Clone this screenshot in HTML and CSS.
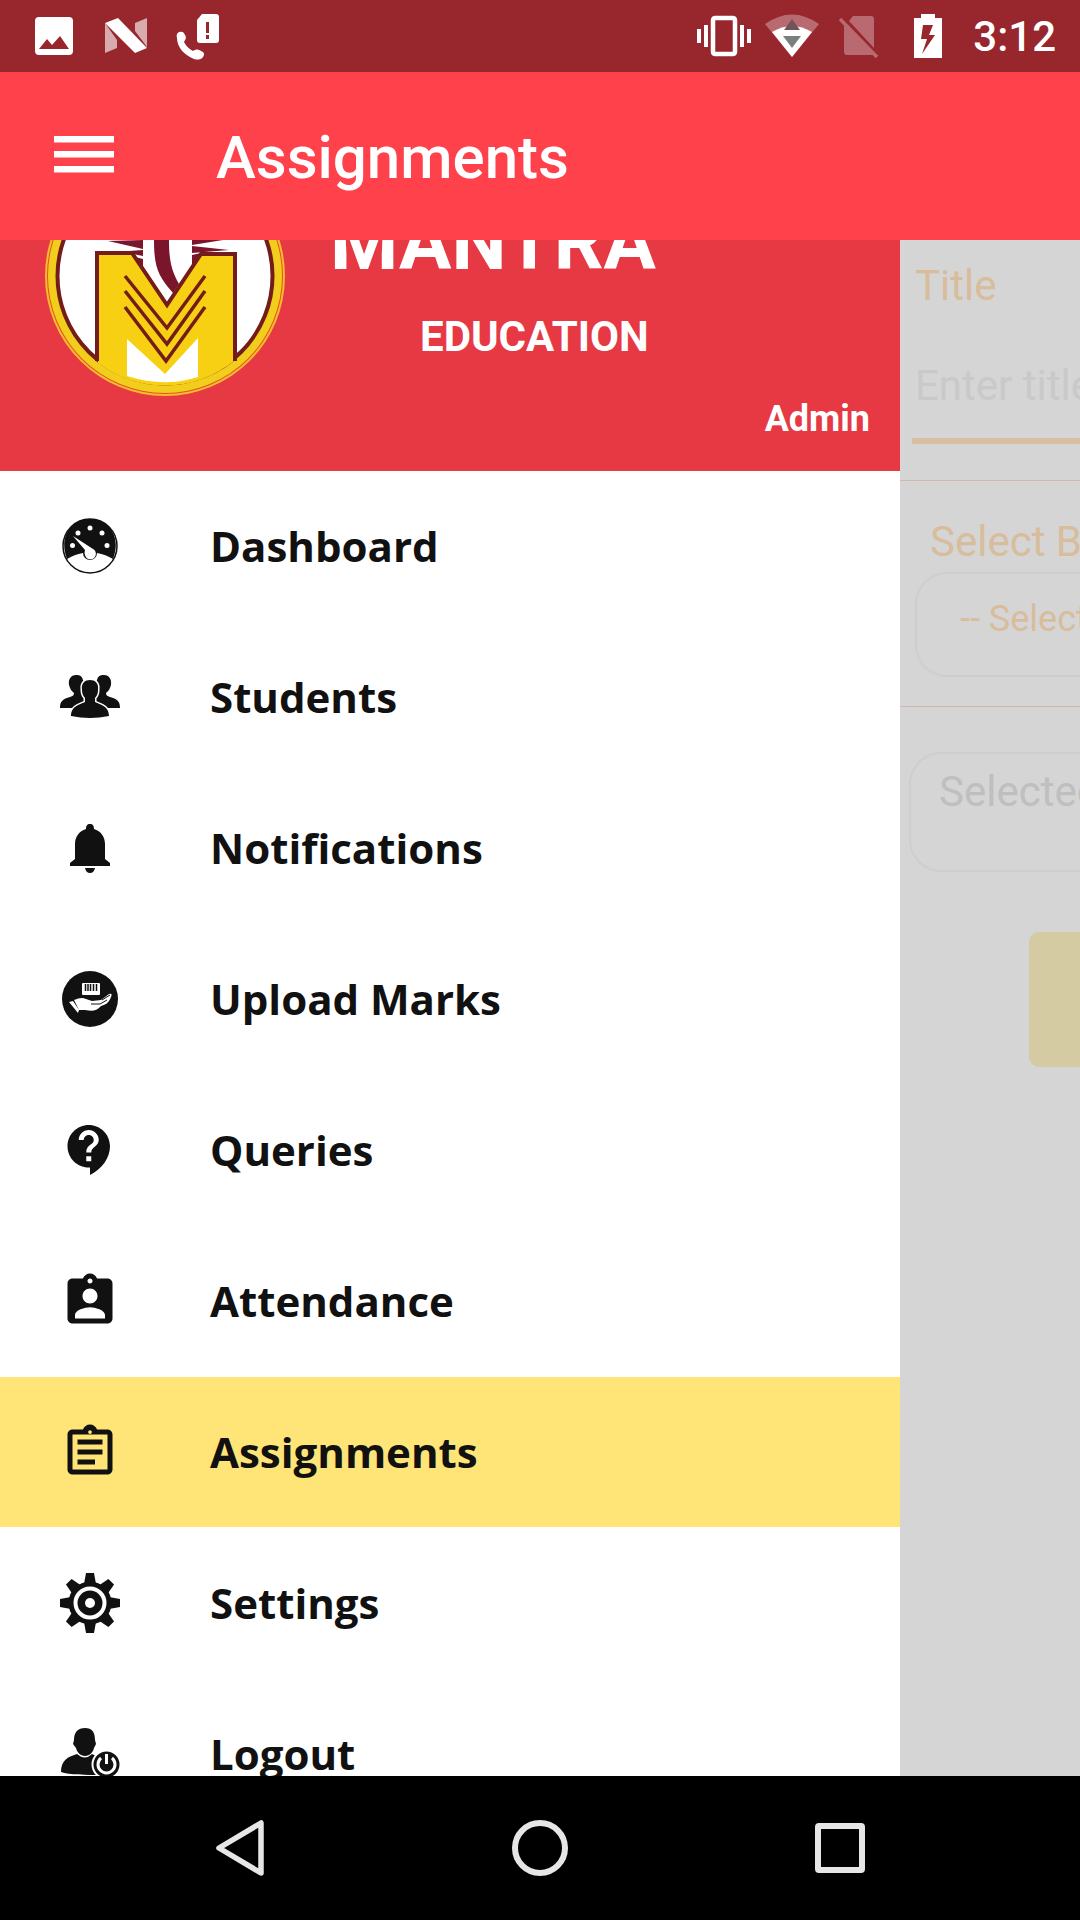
FILE: index.html
```html
<!DOCTYPE html>
<html lang="en">
<head>
<meta charset="utf-8">
<meta name="viewport" content="width=device-width, initial-scale=1">
<title>Assignments</title>
<link rel="stylesheet" href="styles.css">
</head>
<body>
<div class="app">
  <div class="status">
    <svg class="status-icon" viewBox="0 0 54 60" aria-hidden="true"><path fill="#fff" fill-rule="evenodd" d="M12 11h30q4 0 4 4v30q0 4-4 4H12q-4 0-4-4V15q0-4 4-4zm0 32h30l-9-13-8 9-5-6z"/></svg>
    <svg class="status-icon left" viewBox="0 0 54 60" aria-hidden="true"><path fill="#fff" opacity=".62" d="M6 17l12 17v8L6 47zM36 17l12-5v29L36 25z"/><path fill="#fff" d="M6 17l13-5 29 30-12 5z"/></svg>
    <svg class="status-icon left" viewBox="0 0 54 60" aria-hidden="true"><path fill="#fff" fill-rule="evenodd" d="M31 8h14q3 0 3 3v23q0 3-3 3H29q-3 0-3-3V14zm4 8v11h3V16zm0 13v4h3v-4z"/><path fill="#fff" d="M8 26c3-1 5 0 6 3 2 3 0 5-1 7 2 4 5 7 9 9 3-2 5-2 8 0 3 1 4 3 2 6-2 3-6 3-9 2C13 49 6 41 6 32c-1-3 0-5 2-6z"/></svg>
    <span class="spacer"></span>
    <svg class="status-icon right" viewBox="0 0 54 60" aria-hidden="true"><rect x="16" y="12" width="22" height="36" rx="2" fill="none" stroke="#fff" stroke-width="4.500"/><path fill="#fff" d="M0 23h4v14H0zM7 19h4v22H7zM43 19h4v22h-4zM50 23h4v14h-4z"/></svg>
    <svg class="status-icon right" viewBox="0 0 54 60" aria-hidden="true"><path fill="#b96a70" d="M0 18Q27-1 54 18L27 51z"/><path fill="#fff" d="M7 26Q27 14 47 26L27 51z"/><path fill="#6f5556" d="M27 13l8 11H19z"/><path fill="#7a8080" d="M18 30h18l-9 12z"/></svg>
    <svg class="status-icon right" viewBox="0 0 54 60" aria-hidden="true"><path fill="#b96a70" d="M20 10h18q3 0 3 3v29L16 15zM11 19l30 30H14q-3 0-3-3z"/><path d="M7 13l37 38" stroke="#b96a70" stroke-width="3.500"/></svg>
    <svg class="status-icon right" viewBox="0 0 54 60" aria-hidden="true"><path fill="#fff" fill-rule="evenodd" d="M20 8h14v4h7v40H13V12h7zm2 11l-2 14h6l-5 15 13-19h-6l4-10z"/></svg>
    <span class="clock">3:12</span>
  </div>

  <header class="toolbar">
    <button class="menu-button" type="button" aria-label="Menu"><svg class="burger" viewBox="0 0 60 40" aria-hidden="true"><path fill="#fff" d="M0 0h60v6.500H0zM0 15h60v6.500H0zM0 30h60v6.500H0z"/></svg></button>
    <h1 class="toolbar-title">Assignments</h1>
  </header>

  <div class="stage">
    <aside class="drawer">
      <div class="profile">
        <svg class="logo" viewBox="45 10 240 156" aria-hidden="true">
          <circle cx="165" cy="46" r="120" fill="#f7bd2a"/>
          <circle cx="165" cy="46" r="118" fill="#e5502c"/>
          <circle cx="165" cy="46" r="117" fill="#f2ce1c"/>
          <circle cx="165" cy="46" r="107.500" fill="#fff" stroke="#731c1a" stroke-width="4"/>
          <path fill="#7a152b" d="M108 11l35-1v9zM129 21l14-1v6l-10-2zM135 27l8 2v10zM192 10h31l-31 5zM192 16l37 4-37 3zM192 25l9-2-9 13zM154 10c0 27 4 36 19 53l6-9c-8-14-10-25-10-44z"/>
          <path fill="#f8d013" d="M98 22h33l36 53 34-51h33v107A110 110 0 0 1 98 133z"/>
          <path fill="none" stroke="#731c1a" stroke-width="4" d="M97 131V23h35l35 52 34-51h34v107"/>
          <path fill="none" stroke="#731c1a" stroke-width="3.500" d="M125 46l42 52 38-52M125 61l42 53 38-53M125 77l41 54 39-54"/>
          <path fill="#fff" d="M127 109l38 35 33-36v39q-34 11-71-1z"/>
        </svg>
        <div class="brand">
          <p class="brand-name">MANTRA</p>
          <p class="brand-sub">EDUCATION</p>
          <p class="role">Admin</p>
        </div>
      </div>
      <nav class="menu">
        <a class="item" href="#dashboard">
          <svg class="icon" viewBox="0 0 60 60" aria-hidden="true"><circle cx="30" cy="30" r="27" fill="#fff" stroke="#111" stroke-width="1.500"/><path fill="#111" d="M7 43C-2 20 12 3 30 3s32 17 23 40c-5-3-10-5-16-6a7 7 0 1 1-14 0c-6 1-11 3-16 6z"/><path fill="#fff" d="M13 20l20 13a5.500 5.500 0 1 1-8 6q-1-2 0-5z"/><g fill="#fff"><circle cx="12.500" cy="29.500" r="2.500"/><circle cx="18" cy="17" r="2.500"/><circle cx="30" cy="12" r="2.500"/><circle cx="42" cy="17" r="2.500"/><circle cx="47" cy="29.500" r="2.500"/></g></svg>
          <span>Dashboard</span></a>
        <a class="item" href="#students">
          <svg class="icon" viewBox="0 0 60 60" aria-hidden="true"><path fill="#111" d="M9 18c-1-7 3-10 7-10 4 0 6 1 7 5l3 8v20H0c0-7 3-9 10-11 3-1 4-2 4-4-3-2-4-5-5-8zM51 18c1-7-3-10-7-10-4 0-6 1-7 5l-3 8v20h26c0-7-3-9-10-11-3-1-4-2-4-4 3-2 4-5 5-8z"/><path fill="#111" stroke="#fff" stroke-width="3" paint-order="stroke" d="M22 23c-1-7 3-10 8-10s9 3 8 10c0 3-1 6-3 8v4c3 2 14 3 14 14q-19 4-38 0c0-11 11-12 14-14v-4c-2-2-3-5-3-8z"/></svg>
          <span>Students</span></a>
        <a class="item" href="#notifications">
          <svg class="icon" viewBox="0 0 60 60" aria-hidden="true"><path fill="#111" d="M30 6c3 0 4 2 4 5 7 2 11 8 11 15v15l5 4v3H10v-3l5-4V26c0-7 4-13 11-15 0-3 1-5 4-5zM25 50h10q-1 5-5 5t-5-5z"/></svg>
          <span>Notifications</span></a>
        <a class="item" href="#upload">
          <svg class="icon" viewBox="0 0 60 60" aria-hidden="true"><circle cx="30" cy="30" r="28" fill="#111"/><rect x="22" y="14" width="18" height="12" rx="1" fill="#fff"/><path stroke="#111" stroke-width="1.500" d="M25.500 15v7M28 15v7M30.500 15v7M33.500 15v7M36.500 15v7"/><path fill="#fff" d="M9 33l4-1 6 9-1 3zM14 31c5-2 8-3 12-1l6 2 9-1 8-6c3-1 3 1 2 3-2 6-6 8-10 9-5 6-10 5-16 4l-6 0z"/><path fill="none" stroke="#111" d="M31 35h9l7-4M42 31l8-5"/></svg>
          <span>Upload Marks</span></a>
        <a class="item" href="#queries">
          <svg class="icon" viewBox="0 0 24 24" aria-hidden="true"><path fill="#111" d="M11.500 2C6.810 2 3 5.810 3 10.500S6.810 19 11.500 19h.5v3c4.860-2.340 8-7 8-11.500C20 5.810 16.190 2 11.500 2zm1 14.500h-2v-2h2v2zm0-3.500h-2c0-3.250 3-3 3-5 0-1.100-.9-2-2-2s-2 .9-2 2h-2c0-2.210 1.790-4 4-4s4 1.790 4 4c0 2.500-3 2.750-3 5z"/></svg>
          <span>Queries</span></a>
        <a class="item" href="#attendance">
          <svg class="icon" viewBox="0 0 24 24" aria-hidden="true"><path fill="#111" d="M19 3h-4.180C14.400 1.840 13.300 1 12 1c-1.300 0-2.400.84-2.820 2H5c-1.100 0-2 .9-2 2v14c0 1.100.9 2 2 2h14c1.100 0 2-.9 2-2V5c0-1.100-.9-2-2-2zm-7 0c.55 0 1 .45 1 1s-.45 1-1 1-1-.45-1-1 .45-1 1-1zm0 4c1.660 0 3 1.340 3 3s-1.340 3-3 3-3-1.340-3-3 1.340-3 3-3zm6 12H6v-1.400c0-2 4-3.100 6-3.100s6 1.100 6 3.100V19z"/></svg>
          <span>Attendance</span></a>
        <a class="item active" href="#assignments" aria-current="page">
          <svg class="icon" viewBox="0 0 24 24" aria-hidden="true"><path fill="#111" fill-rule="evenodd" d="M19 3h-4.180C14.400 1.840 13.300 1 12 1c-1.300 0-2.400.84-2.820 2H5c-1.100 0-2 .9-2 2v14c0 1.100.9 2 2 2h14c1.100 0 2-.9 2-2V5c0-1.100-.9-2-2-2zm-7 .25a.75.75 0 0 1 0 1.500.75.75 0 0 1 0-1.500zM5 5h14v14H5zM7 7h10v2H7zM7 11h10v2H7zM7 15h7v2H7z"/></svg>
          <span>Assignments</span></a>
        <a class="item" href="#settings">
          <svg class="icon" viewBox="0 0 60 60" aria-hidden="true"><g fill="#111"><circle cx="30" cy="30" r="21.500"/><path d="M26 0h8l2 11H24zM26 60h8l2-11H24zM0 26v8l11 2V24zM60 26v8l-11 2V24z"/><path transform="rotate(45 30 30)" d="M26 0h8l2 11H24zM26 60h8l2-11H24zM0 26v8l11 2V24zM60 26v8l-11 2V24z"/></g><circle cx="30" cy="30" r="14.500" fill="none" stroke="#fff" stroke-width="4"/><circle cx="30" cy="30" r="5" fill="#fff"/></svg>
          <span>Settings</span></a>
        <a class="item" href="#logout">
          <svg class="icon" viewBox="0 0 60 60" aria-hidden="true"><path fill="#111" d="M14 16c0-8 4-12 11-12s10 4 10 12l1 4-2 4c-1 4-4 8-9 8s-8-4-9-8l-3-4zM17 30q8 7 15 0l8 4v17c-13 0-31 0-39-3 0-11 6-15 16-18z"/><circle cx="46.500" cy="40.500" r="14" fill="#111" stroke="#fff" stroke-width="2"/><path fill="none" stroke="#fff" stroke-width="3" d="M41 34a8.500 8.500 0 1 0 11 0M46.500 30v10"/></svg>
          <span>Logout</span></a>
      </nav>
    </aside>

    <main class="page">
      <form class="form">
        <section class="section title-section">
          <label class="label" for="title">Title</label>
          <input class="text-input" id="title" type="text" placeholder="Enter title">
        </section>
        <section class="section batch-section">
          <label class="label indent" for="batch">Select B</label>
          <select class="select" id="batch"><option>-- Select</option></select>
        </section>
        <section class="section submit-section">
          <textarea class="selected" aria-label="Selected" placeholder="Selected"></textarea>
          <button class="submit" type="button" aria-label="Submit"></button>
        </section>
      </form>
    </main>
  </div>

  <footer class="navbar">
    <button class="nav-button" type="button" aria-label="Back"><svg class="nav-icon" viewBox="0 0 60 60" aria-hidden="true"><path fill="none" stroke="#e6e6e6" stroke-width="5.500" stroke-linejoin="round" d="M51 5v50L9 30z"/></svg></button>
    <button class="nav-button" type="button" aria-label="Home"><svg class="nav-icon" viewBox="0 0 60 60" aria-hidden="true"><circle cx="30" cy="30" r="25" fill="none" stroke="#e6e6e6" stroke-width="6"/></svg></button>
    <button class="nav-button" type="button" aria-label="Recent apps"><svg class="nav-icon" viewBox="0 0 60 60" aria-hidden="true"><rect x="8" y="8" width="44" height="44" rx="1" fill="none" stroke="#e6e6e6" stroke-width="6"/></svg></button>
  </footer>
</div>
</body>
</html>
```
FILE: styles.css
```css
* { box-sizing: border-box; }
body { margin: 0; font-family: Roboto, sans-serif; background: #000; }
p, h1 { margin: 0; }
button { border: 0; padding: 0; background: none; }
svg { display: block; flex: none; }

.app { display: flex; flex-direction: column; height: 100vh; overflow: hidden; }

.status { display: flex; align-items: center; flex: none; height: 72px; padding: 0 24px 0 27px; background: #98262d; }
.status-icon { width: 54px; height: 60px; }
.status-icon.left { margin-left: 18px; }
.status-icon.right { margin-right: 14px; }
.spacer { flex: 1; }
.clock { margin-left: 4px; padding-top: 2px; font-size: 42px; line-height: 48px; font-weight: 500; color: #fff; }

.toolbar { display: flex; align-items: center; flex: none; gap: 102px; height: 168px; padding: 0 54px; background: #ff414b; color: #fff; }
.burger { width: 60px; height: 40px; }
.toolbar-title { font-size: 60px; line-height: 72px; font-weight: 500; padding-top: 4px; }

.stage { display: flex; flex: 1; min-height: 0; overflow: hidden; background: #d5d5d5; }

.drawer { flex: 0 0 calc(100% - 180px); overflow: hidden; background: #fff; }
.profile { display: flex; align-items: flex-end; gap: 45px; height: 231px; padding: 0 30px 0 45px; background: #e63943; overflow: hidden; color: #fff; font-weight: 700; }
.logo { width: 240px; height: 156px; margin-bottom: 75px; }
.brand { flex: 1; padding-bottom: 31px; }
.brand-name { font-size: 78px; line-height: 92px; }
.brand-sub { margin-top: 24px; padding-left: 90px; font-size: 42px; line-height: 48px; }
.role { margin-top: 37px; font-size: 36px; line-height: 42px; text-align: right; }

.menu { display: flex; flex-direction: column; gap: 1px; }
.item { display: flex; align-items: center; gap: 90px; height: 150px; padding: 0 60px; font-family: "Open Sans", "Noto Sans", sans-serif; font-size: 42px; line-height: 58px; font-weight: 700; color: #111; text-decoration: none; }
.item.active { background: #ffe477; }
.icon { width: 60px; height: 60px; }

.page { flex: 0 0 100%; overflow: hidden; }
.section { display: flex; flex-direction: column; border-bottom: 1px solid #cfb9ae; }
.label { padding: 0 15px; font-size: 42px; line-height: 48px; color: #d8bd9c; }
.label.indent { padding: 0 30px; }
.title-section { height: 241px; padding: 22px 0 0; }
.text-input { height: 120px; margin: 14px 12px 0; padding: 8px 3px 0; border: 0; border-bottom: 6px solid #dabda3; background: transparent; font: 42px Roboto, sans-serif; }
.text-input::placeholder { color: #c9c9c9; opacity: 1; }
.batch-section { height: 226px; padding-top: 37px; }
.select { appearance: none; height: 105px; margin: 6px 15px 0; padding: 0 43px 12px; border: 2px solid #cecece; border-radius: 32px; background: transparent; font: 36px Roboto, sans-serif; color: #d8bd9c; }
.submit-section { padding-top: 45px; border: 0; }
.selected { height: 120px; margin: 0 9px; padding: 13px 28px; border: 2px solid #cecece; border-radius: 32px; background: transparent; font: 42px/50px Roboto, sans-serif; resize: none; }
.selected::placeholder { color: #bfbfbf; opacity: 1; }
.submit { height: 135px; margin: 60px 129px 0; border-radius: 10px; background: #d5cba2; }

.navbar { display: flex; flex: none; height: 144px; padding: 0 90px; background: #000; }
.nav-button { display: flex; flex: 1; align-items: center; justify-content: center; }
.nav-icon { width: 60px; height: 60px; }
```
